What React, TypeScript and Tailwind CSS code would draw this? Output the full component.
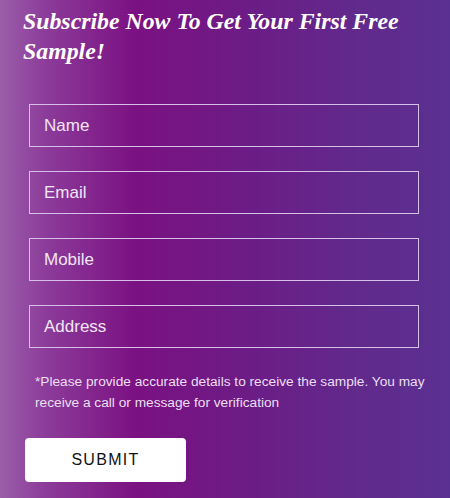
export default function App() {
  const fields = ["Name", "Email", "Mobile", "Address"];

  return (
    <div className="w-[450px] h-[498px] overflow-hidden bg-[linear-gradient(90deg,#9b5ea9_0%,#8c3c9a_10%,#7b1182_30%,#6c1c86_55%,#612a8c_80%,#5a3092_100%)] font-['Liberation_Sans',Arial,sans-serif]">
      <div className="pl-[23px] pr-4 pt-[6px]">
        <h1 className="font-['Liberation_Serif','Times_New_Roman',serif] italic font-bold text-white text-[23.8px] leading-[30px]">
          Subscribe Now To Get Your First Free Sample!
        </h1>
      </div>

      <form className="flex flex-col gap-6 pl-[29px] pr-[31px] mt-[38px]">
        {fields.map((f) => (
          <div
            key={f}
            className="h-[43px] border-[1.5px] border-[#d6c0ea] flex items-center pl-[14px] text-[17px] text-[#f1e6f5]"
          >
            {f}
          </div>
        ))}
      </form>

      <p className="pl-[35px] pr-1 mt-[23px] text-[13.7px] leading-[21px] text-[#ecdff1]">
        *Please provide accurate details to receive the sample. You may receive a call or message for verification
      </p>

      <button className="ml-[25px] mt-[25px] w-[161px] h-[44px] bg-white rounded-[4px] text-[16px] font-medium tracking-[0.08em] text-[#111]">
        SUBMIT
      </button>
    </div>
  );
}
